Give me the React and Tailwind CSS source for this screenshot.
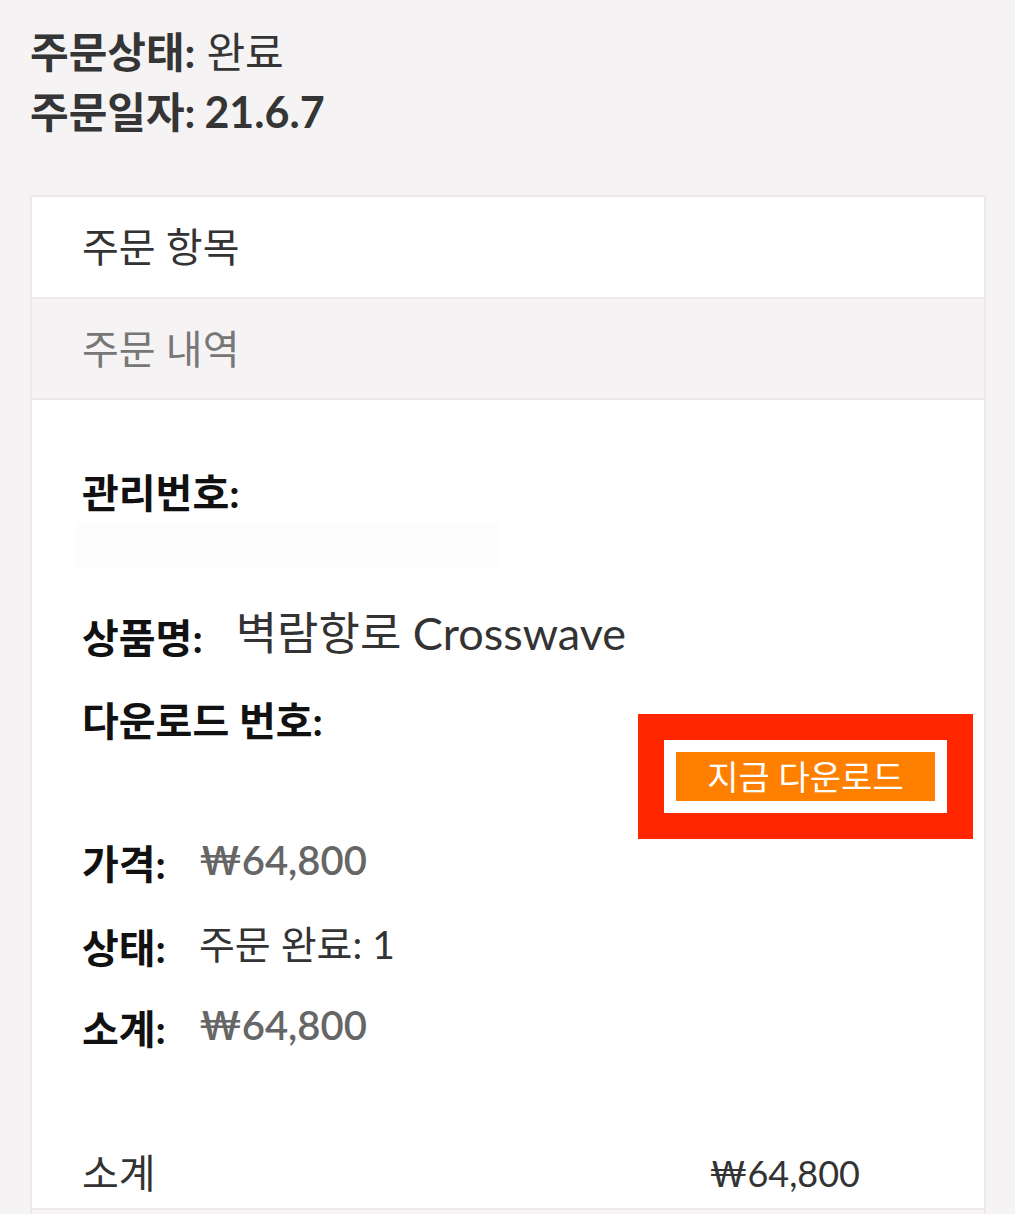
import React from "react";

const font = { fontFamily: "Lato, 'Noto Sans CJK KR', 'Noto Sans', sans-serif" };

function Field({ label, children, className = "" }) {
  return (
    <div className={`flex items-center h-[48px] ${className}`}>
      <span className="text-[40px] font-bold text-[#111] leading-[48px]">{label}</span>
      <span className="ml-[33px] leading-[48px]">{children}</span>
    </div>
  );
}

function App() {
  return (
    <div style={font} className="min-h-screen bg-[#f5f3f4] pt-[22px] pb-[40px]">
      <div className="px-[30px] text-[42px] text-[#353535]">
        <div className="h-[60px] flex items-center">
          <span className="font-bold">주문상태:</span>
          <span className="ml-[11px]">완료</span>
        </div>
        <div className="h-[60px] flex items-center font-bold">
          <span>주문일자:</span>
          <span className="ml-[9px] text-[43px]">21.6.7</span>
        </div>
      </div>

      <div className="mt-[53px] ml-[30px] mr-[29px] border-2 border-[#ede8e9] bg-white">
        <div className="h-[100px] flex items-center pl-[50px] text-[40px] text-[#333]">주문 항목</div>
        <div className="h-[103px] flex items-center pl-[50px] text-[40px] text-[#777] bg-[#f5f3f4] border-y-2 border-[#ede8e9]">
          주문 내역
        </div>

        <div className="pl-[50px] pr-[49px] pt-[69px] pb-[11px]">
          <div className="text-[40px] font-bold text-[#111] leading-[48px]">관리번호:</div>
          <div className="mt-[5px] -ml-[7px] w-[425px] h-[45px] bg-[#fdfdfd]"></div>

          <Field label="상품명:" className="mt-[47px]">
            <span className="text-[45px] text-[#333]">벽람항로 Crosswave</span>
          </Field>

          <div className="mt-[35px] text-[40px] font-bold text-[#111] leading-[48px]">다운로드 번호:</div>
          <div className="mt-[7px] flex justify-end">
            <div className="relative">
              <button className="w-[259px] h-[49px] bg-[#ff7f00] text-white text-[34px] leading-[49px]">
                지금 다운로드
              </button>
              <span className="pointer-events-none absolute -inset-[38px] border-[26px] border-[#ff2600]"></span>
            </div>
          </div>

          <Field label="가격:" className="mt-[39px]">
            <span className="text-[40px] font-semibold text-[#666]">₩64,800</span>
          </Field>
          <Field label="상태:" className="mt-[36px]">
            <span className="text-[39px] text-[#333]">주문 완료: 1</span>
          </Field>
          <Field label="소계:" className="mt-[33px]">
            <span className="text-[40px] font-semibold text-[#666]">₩64,800</span>
          </Field>

          <div className="mt-[96px] flex justify-between items-center pr-[75px] h-[48px] text-[40px] text-[#333]">
            <span>소계</span>
            <span className="text-[36px]">₩64,800</span>
          </div>
        </div>
        <div className="h-[60px] bg-[#f5f3f4] border-t-2 border-[#ede8e9]"></div>
      </div>
    </div>
  );
}

export default App;
